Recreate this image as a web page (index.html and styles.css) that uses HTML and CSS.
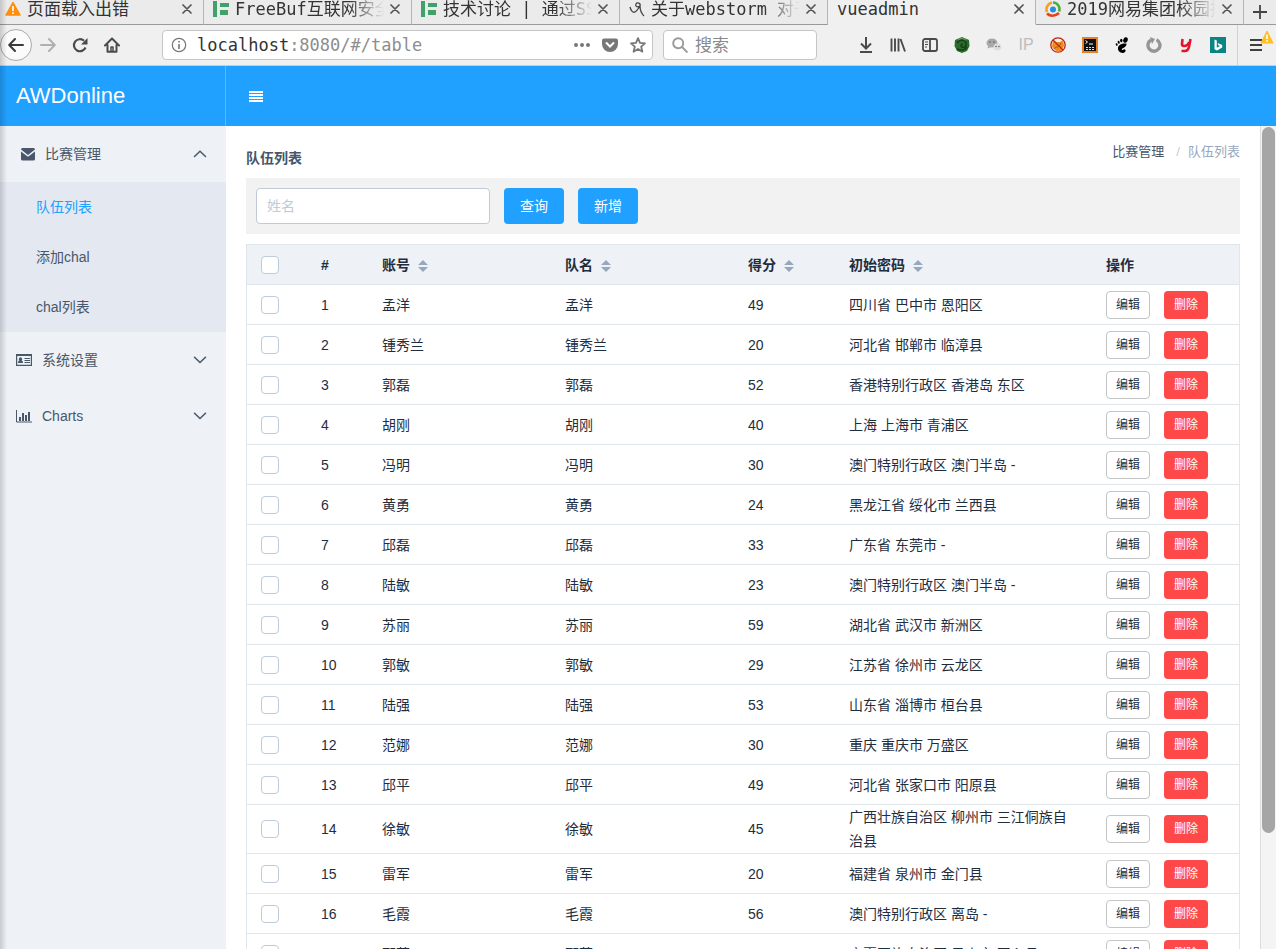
FILE: index.html
```html
<!DOCTYPE html>
<html lang="zh-CN">
<head>
<meta charset="utf-8">
<meta name="viewport" content="width=device-width, initial-scale=1">
<title>vueadmin</title>
<link rel="stylesheet" href="styles.css">
</head>
<body>
<svg class="sprite" aria-hidden="true">
  <symbol id="i-close" viewBox="0 0 10 10"><path d="M1 1l8 8M9 1L1 9" fill="none" stroke="#555" stroke-width="1.7" stroke-linecap="round"/></symbol>
  <symbol id="i-freebuf" viewBox="0 0 16 16"><path d="M0 0h4v16H0zM7 2h9v4H7zM7 9h8v5H7z" fill="#42a06b"/></symbol>
  <symbol id="i-sort" viewBox="0 0 10 12"><path d="M5 0l5 5H0zM0 7h10l-5 5z" fill="#97a8be"/></symbol>
  <symbol id="i-down" viewBox="0 0 14 8"><path d="M1.5 1.2L7 6.5l5.500-5.300" fill="none" stroke="#48576a" stroke-width="1.500" stroke-linecap="round"/></symbol>
  <symbol id="i-up" viewBox="0 0 14 8"><path d="M1.500 6.500L7 1.200l5.500 5.300" fill="none" stroke="#48576a" stroke-width="1.500" stroke-linecap="round"/></symbol>
</svg>

<div class="tabs">
  <div class="tab tab-first">
    <svg class="favicon" viewBox="0 0 16 16"><path d="M8 1.500L15 14H1z" fill="#ff8f0c" stroke="#ff8f0c" stroke-width="1.500" stroke-linejoin="round"/><path d="M8 5v5M8 11.300v1.700" stroke="#fff" stroke-width="1.600"/></svg>
    <span class="tab-title">页面载入出错</span>
    <button class="tab-close" type="button" aria-label="关闭"><svg><use href="#i-close"/></svg></button>
  </div>
  <div class="tab">
    <svg class="favicon"><use href="#i-freebuf"/></svg>
    <span class="tab-title fade">FreeBuf互联网安全新媒体平台</span>
    <button class="tab-close" type="button" aria-label="关闭"><svg><use href="#i-close"/></svg></button>
  </div>
  <div class="tab">
    <svg class="favicon"><use href="#i-freebuf"/></svg>
    <span class="tab-title fade">技术讨论 | 通过SSRF</span>
    <button class="tab-close" type="button" aria-label="关闭"><svg><use href="#i-close"/></svg></button>
  </div>
  <div class="tab">
    <svg class="favicon" viewBox="0 0 16 16" fill="none" stroke="#444" stroke-width="1.300"><path d="M1 6c1 4 3 6 5 5s3-3 5-6c1-3-3-4-4-2s1 4 4 2M11 5c0 4 1 7 4 10"/></svg>
    <span class="tab-title fade">关于webstorm 对于</span>
    <button class="tab-close" type="button" aria-label="关闭"><svg><use href="#i-close"/></svg></button>
  </div>
  <div class="tab active">
    <span class="tab-title">vueadmin</span>
    <button class="tab-close" type="button" aria-label="关闭"><svg><use href="#i-close"/></svg></button>
  </div>
  <div class="tab">
    <svg class="favicon" viewBox="0 0 16 16" fill="none" stroke-width="2.600"><path d="M2 11a7 7 0 0 1 5-9.500" stroke="#f7a01c"/><path d="M8 1.500a6.600 6.600 0 0 1 6 9" stroke="#4cae3f"/><path d="M2 12.500c3 3 8 3 12-.500" stroke="#e5431c"/><circle cx="8" cy="8.500" r="3" fill="#2b8de0" stroke="none"/></svg>
    <span class="tab-title fade">2019网易集团校园招聘</span>
    <button class="tab-close" type="button" aria-label="关闭"><svg><use href="#i-close"/></svg></button>
  </div>
  <button class="tab-new" type="button" aria-label="新标签页"><svg viewBox="0 0 14 14"><path d="M7 0v14M0 7h14" stroke="#444" stroke-width="1.800"/></svg></button>
</div>

<div class="navbar">
  <button class="nav-btn nav-back" type="button" aria-label="后退"><svg viewBox="0 0 16 16" fill="none" stroke="#3b3b3b" stroke-width="2" stroke-linecap="round" stroke-linejoin="round"><path d="M15 8H1.500M7 2L1.200 8 7 14"/></svg></button>
  <button class="nav-btn" type="button" aria-label="前进"><svg viewBox="0 0 16 16" fill="none" stroke="#b0b0b0" stroke-width="2" stroke-linecap="round" stroke-linejoin="round"><path d="M1 8h13.500M9 2l5.800 6L9 14"/></svg></button>
  <button class="nav-btn" type="button" aria-label="刷新"><svg viewBox="0 0 16 16"><path d="M13.500 10.500A6 6 0 1 1 12 3.800" fill="none" stroke="#4a4a4a" stroke-width="2.200"/><path d="M15.500 1v6.500H9z" fill="#4a4a4a"/></svg></button>
  <button class="nav-btn" type="button" aria-label="主页"><svg viewBox="0 0 16 16" fill="none" stroke="#4a4a4a" stroke-width="2" stroke-linejoin="round" stroke-linecap="round"><path d="M1 8.500L8 1.500l7 7M3.500 8v6.800h9V8"/><path d="M7 14v-4h2v4" stroke-width="1.500"/></svg></button>
  <div class="urlbar">
    <svg class="ic16" viewBox="0 0 16 16"><circle cx="8" cy="8" r="6.700" fill="none" stroke="#777" stroke-width="1.200"/><path d="M8 7v5M8 4v1.600" stroke="#777" stroke-width="1.600"/></svg>
    <span class="url">localhost<span class="url-rest">:8080/#/table</span></span>
    <svg class="ic16" viewBox="0 0 16 16" fill="#777"><circle cx="2" cy="8" r="2"/><circle cx="8" cy="8" r="2"/><circle cx="14" cy="8" r="2"/></svg>
    <svg class="ic16" viewBox="0 0 16 16"><path d="M2 1.500h12a2 2 0 0 1 2 2V7A8 8 0 0 1 0 7V3.500a2 2 0 0 1 2-2z" fill="#777"/><path d="M4.500 6L8 9.500 11.500 6" fill="none" stroke="#fff" stroke-width="2" stroke-linecap="round"/></svg>
    <svg class="ic16" viewBox="0 0 16 16"><path d="M8 1.200l2 4.700 5 .400-3.800 3.400 1.200 5L8 12l-4.400 2.700 1.200-5L1 6.300l5-.400z" fill="none" stroke="#777" stroke-width="1.800" stroke-linejoin="round"/></svg>
  </div>
  <label class="searchbar">
    <svg class="ic16" viewBox="0 0 16 16" fill="none" stroke="#999" stroke-width="1.900"><circle cx="6.200" cy="6.200" r="5"/><path d="M10 10l5.500 5.500"/></svg>
    <input type="text" placeholder="搜索" aria-label="搜索">
  </label>
  <div class="tools">
    <button class="nav-btn" type="button" aria-label="下载"><svg viewBox="0 0 16 16" fill="none" stroke="#4a4a4a" stroke-width="2"><path d="M8 0v11M3 6.500l5 5 5-5M2 15h12"/></svg></button>
    <button class="nav-btn" type="button" aria-label="书架"><svg viewBox="0 0 16 16" fill="none" stroke="#4a4a4a" stroke-width="1.900"><path d="M1.500 1.500v13M5 1.500v13M8.500 1.500v13M10.500 2l4.500 12.500"/></svg></button>
    <button class="nav-btn" type="button" aria-label="侧栏"><svg viewBox="0 0 16 16" fill="none" stroke="#4a4a4a" stroke-width="1.800"><rect x="1" y="2" width="14" height="12" rx="2"/><path d="M8 2v12"/><path d="M3 5h3M3 7.500h3M3 10h2" stroke-width="1"/></svg></button>
    <button class="nav-btn" type="button" aria-label="扩展"><svg viewBox="0 0 16 16"><path d="M8 0l7 3 .500 6L13 14l-5 2-5-2L.500 9 1 3z" fill="#2c6a2d"/><path d="M3 6c3-4 8-3 9 0s-2 5-4 4-1-3 1-3M3 12c4 2 8 1 10-2" fill="none" stroke="#123f18" stroke-width="1.500"/><path d="M4 3c3-2 5-2 8 0" stroke="#6da35f" fill="none"/></svg></button>
    <button class="nav-btn" type="button" aria-label="微信"><svg viewBox="0 0 16 16"><ellipse cx="6" cy="6" rx="5.500" ry="4.500" fill="#a9a9a9"/><ellipse cx="11.500" cy="10" rx="4" ry="3.500" fill="#dedede"/><g fill="#555"><circle cx="4" cy="5" r=".800"/><circle cx="8" cy="5" r=".800"/><circle cx="10" cy="9.500" r=".700"/><circle cx="13" cy="9.500" r=".700"/></g><path d="M2 9l-.500 2.500L5 10z" fill="#a9a9a9"/></svg></button>
    <button class="nav-btn ext-ip" type="button">IP</button>
    <button class="nav-btn" type="button" aria-label="FoxyProxy"><svg viewBox="0 0 16 16"><path d="M3 3l3 2h4l3-2 1 6-3 5H6L2 10z" fill="#ef8b1d"/><path d="M4 12c2-3 5-1 7-6" stroke="#a4501c" fill="none"/><circle cx="8" cy="8" r="7.200" fill="none" stroke="#bd2416" stroke-width="1.300"/><path d="M3 3l10 10" stroke="#bd2416" stroke-width="1.300"/></svg></button>
    <button class="nav-btn" type="button" aria-label="终端"><svg viewBox="0 0 16 16"><path d="M0 0h16v16H0z" fill="#e0842a"/><path d="M2 2h12v12H2z" fill="#111"/><path d="M3.500 3.500l2 1.500-2 1.500M7 7h4" fill="none" stroke="#fff"/><path d="M4 10.500h8M4 12.500h8" stroke="#ddd" stroke-dasharray="2 1"/></svg></button>
    <button class="nav-btn" type="button" aria-label="GNOME"><svg viewBox="0 0 16 16"><ellipse cx="11.500" cy="3" rx="2.200" ry="2.800" transform="rotate(20 11.500 3)"/><ellipse cx="7.300" cy="3.600" rx="1.200" ry="1.800"/><ellipse cx="4.700" cy="5.200" rx="1" ry="1.500" transform="rotate(-15 4.700 5.200)"/><ellipse cx="2.700" cy="7.500" rx=".900" ry="1.300" transform="rotate(-25 2.700 7.500)"/><path d="M12.500 6.800c-3-1-8 .500-8.500 4-.400 3 2 5.200 4.500 5.200s4-2.500 2.500-3.500-2 1-3 .500c-1.500-1.500 5-2.500 4.500-6.200z"/></svg></button>
    <button class="nav-btn" type="button" aria-label="同步"><svg viewBox="0 0 16 16"><path d="M10.500 2.800A6 6 0 1 1 5 3" fill="none" stroke="#959595" stroke-width="3.400"/><path d="M4 0l5 2-3 5z" fill="#959595"/></svg></button>
    <button class="nav-btn" type="button" aria-label="有道"><svg viewBox="0 0 16 16" fill="none" stroke="#e3152d" stroke-width="2.600"><path d="M4.500 2L4 7q0 2 2 2 4 0 5-4M12.500 2L11 10q-1 4-4 4H3.500"/></svg></button>
    <button class="nav-btn" type="button" aria-label="必应"><svg viewBox="0 0 16 16"><path d="M0 0h16v16H0z" fill="#0b8484"/><path d="M4.500 2.500l2.300.900v7.400l3.200-1.700-1.700-.900L7.500 6l4.700 2v2.500L7 13.500l-2.500-1.300z" fill="#fff"/></svg></button>
  </div>
  <button class="nav-btn nav-menu" type="button" aria-label="菜单">
    <svg viewBox="0 0 16 16"><path d="M1 3h12M1 8h12M1 13h12" stroke="#3f3f3f" stroke-width="2"/></svg>
    <svg class="warn" viewBox="0 0 14 14"><path d="M7 1l6 12H1z" fill="#ffbf1f" stroke="#ffbf1f" stroke-linejoin="round"/><path d="M7 4.500v4.500M7 10.300V12" stroke="#fff" stroke-width="1.600"/></svg>
  </button>
</div>

<header class="header">
  <div class="logo">AWDonline</div>
  <button class="collapse" type="button" aria-label="折叠菜单"><svg viewBox="0 0 14 11"><path d="M0 1h14M0 4h14M0 7h14M0 10h14" stroke="#fff" stroke-width="2"/></svg></button>
</header>

<div class="body">
  <nav class="sidebar">
    <button class="menu-title" type="button">
      <svg class="menu-icon wide" viewBox="0 0 24 14"><path d="M5 2.500A1.500 1.500 0 0 1 6.500 1h11A1.500 1.500 0 0 1 19 2.500L12 8 5 2.500zM5 4.500l7 5.300 7-5.300V12a1.500 1.500 0 0 1-1.500 1.500h-11A1.500 1.500 0 0 1 5 12z" fill="#48576a"/></svg>
      <span>比赛管理</span><svg class="arrow"><use href="#i-up"/></svg>
    </button>
    <div class="submenu">
      <a class="current" href="#/table">队伍列表</a>
      <a href="#/form">添加chal</a>
      <a href="#/list">chal列表</a>
    </div>
    <button class="menu-title" type="button">
      <svg class="menu-icon" viewBox="0 0 16 14"><path d="M.600 1.600h14.800v10.800H.600z" fill="none" stroke="#48576a" stroke-width="1.200"/><path d="M0 1h16v2H0zM2 10c0-2 1-2.500 1.500-2.500a1.700 1.700 0 1 1 2 0C6 7.500 7 8 7 10z" fill="#48576a"/><path d="M8.500 5.500H14M8.500 7.500H14M8.500 9.500H14" stroke="#48576a"/></svg>
      <span>系统设置</span><svg class="arrow"><use href="#i-down"/></svg>
    </button>
    <button class="menu-title" type="button">
      <svg class="menu-icon" viewBox="0 0 16 14"><path d="M.500 1v12H16" fill="none" stroke="#48576a"/><path d="M3 8h2v4H3zM6 4h2v8H6zM9 6h2v6H9zM12 3h2v9h-2z" fill="#48576a"/></svg>
      <span>Charts</span><svg class="arrow"><use href="#i-down"/></svg>
    </button>
  </nav>

  <main class="content">
    <div class="page-head">
      <strong class="page-title">队伍列表</strong>
      <div class="crumbs"><a href="#/">比赛管理</a><span class="sep">/</span><span class="last">队伍列表</span></div>
    </div>
    <form class="filters">
      <input type="text" placeholder="姓名" aria-label="姓名">
      <button class="btn-primary" type="button">查询</button>
      <button class="btn-primary" type="button">新增</button>
    </form>
    <table class="grid">
      <colgroup><col class="c-sel"><col class="c-no"><col class="c-name"><col class="c-name"><col class="c-score"><col class="c-addr"><col class="c-ops"></colgroup>
      <thead>
        <tr><th class="sel"><input type="checkbox" aria-label="全选"></th><th>#</th><th>账号<svg class="sort"><use href="#i-sort"/></svg></th><th>队名<svg class="sort"><use href="#i-sort"/></svg></th><th>得分<svg class="sort"><use href="#i-sort"/></svg></th><th>初始密码<svg class="sort"><use href="#i-sort"/></svg></th><th>操作</th></tr>
      </thead>
      <tbody>
        <tr><td class="sel"><input type="checkbox" aria-label="选择 1"></td><td>1</td><td>孟洋</td><td>孟洋</td><td>49</td><td>四川省 巴中市 恩阳区</td><td><div class="ops"><button class="btn-edit" type="button">编辑</button><button class="btn-del" type="button">删除</button></div></td></tr>
        <tr><td class="sel"><input type="checkbox" aria-label="选择 2"></td><td>2</td><td>锺秀兰</td><td>锺秀兰</td><td>20</td><td>河北省 邯郸市 临漳县</td><td><div class="ops"><button class="btn-edit" type="button">编辑</button><button class="btn-del" type="button">删除</button></div></td></tr>
        <tr><td class="sel"><input type="checkbox" aria-label="选择 3"></td><td>3</td><td>郭磊</td><td>郭磊</td><td>52</td><td>香港特别行政区 香港岛 东区</td><td><div class="ops"><button class="btn-edit" type="button">编辑</button><button class="btn-del" type="button">删除</button></div></td></tr>
        <tr><td class="sel"><input type="checkbox" aria-label="选择 4"></td><td>4</td><td>胡刚</td><td>胡刚</td><td>40</td><td>上海 上海市 青浦区</td><td><div class="ops"><button class="btn-edit" type="button">编辑</button><button class="btn-del" type="button">删除</button></div></td></tr>
        <tr><td class="sel"><input type="checkbox" aria-label="选择 5"></td><td>5</td><td>冯明</td><td>冯明</td><td>30</td><td>澳门特别行政区 澳门半岛 -</td><td><div class="ops"><button class="btn-edit" type="button">编辑</button><button class="btn-del" type="button">删除</button></div></td></tr>
        <tr><td class="sel"><input type="checkbox" aria-label="选择 6"></td><td>6</td><td>黄勇</td><td>黄勇</td><td>24</td><td>黑龙江省 绥化市 兰西县</td><td><div class="ops"><button class="btn-edit" type="button">编辑</button><button class="btn-del" type="button">删除</button></div></td></tr>
        <tr><td class="sel"><input type="checkbox" aria-label="选择 7"></td><td>7</td><td>邱磊</td><td>邱磊</td><td>33</td><td>广东省 东莞市 -</td><td><div class="ops"><button class="btn-edit" type="button">编辑</button><button class="btn-del" type="button">删除</button></div></td></tr>
        <tr><td class="sel"><input type="checkbox" aria-label="选择 8"></td><td>8</td><td>陆敏</td><td>陆敏</td><td>23</td><td>澳门特别行政区 澳门半岛 -</td><td><div class="ops"><button class="btn-edit" type="button">编辑</button><button class="btn-del" type="button">删除</button></div></td></tr>
        <tr><td class="sel"><input type="checkbox" aria-label="选择 9"></td><td>9</td><td>苏丽</td><td>苏丽</td><td>59</td><td>湖北省 武汉市 新洲区</td><td><div class="ops"><button class="btn-edit" type="button">编辑</button><button class="btn-del" type="button">删除</button></div></td></tr>
        <tr><td class="sel"><input type="checkbox" aria-label="选择 10"></td><td>10</td><td>郭敏</td><td>郭敏</td><td>29</td><td>江苏省 徐州市 云龙区</td><td><div class="ops"><button class="btn-edit" type="button">编辑</button><button class="btn-del" type="button">删除</button></div></td></tr>
        <tr><td class="sel"><input type="checkbox" aria-label="选择 11"></td><td>11</td><td>陆强</td><td>陆强</td><td>53</td><td>山东省 淄博市 桓台县</td><td><div class="ops"><button class="btn-edit" type="button">编辑</button><button class="btn-del" type="button">删除</button></div></td></tr>
        <tr><td class="sel"><input type="checkbox" aria-label="选择 12"></td><td>12</td><td>范娜</td><td>范娜</td><td>30</td><td>重庆 重庆市 万盛区</td><td><div class="ops"><button class="btn-edit" type="button">编辑</button><button class="btn-del" type="button">删除</button></div></td></tr>
        <tr><td class="sel"><input type="checkbox" aria-label="选择 13"></td><td>13</td><td>邱平</td><td>邱平</td><td>49</td><td>河北省 张家口市 阳原县</td><td><div class="ops"><button class="btn-edit" type="button">编辑</button><button class="btn-del" type="button">删除</button></div></td></tr>
        <tr><td class="sel"><input type="checkbox" aria-label="选择 14"></td><td>14</td><td>徐敏</td><td>徐敏</td><td>45</td><td>广西壮族自治区 柳州市 三江侗族自治县</td><td><div class="ops"><button class="btn-edit" type="button">编辑</button><button class="btn-del" type="button">删除</button></div></td></tr>
        <tr><td class="sel"><input type="checkbox" aria-label="选择 15"></td><td>15</td><td>雷军</td><td>雷军</td><td>20</td><td>福建省 泉州市 金门县</td><td><div class="ops"><button class="btn-edit" type="button">编辑</button><button class="btn-del" type="button">删除</button></div></td></tr>
        <tr><td class="sel"><input type="checkbox" aria-label="选择 16"></td><td>16</td><td>毛霞</td><td>毛霞</td><td>56</td><td>澳门特别行政区 离岛 -</td><td><div class="ops"><button class="btn-edit" type="button">编辑</button><button class="btn-del" type="button">删除</button></div></td></tr>
        <tr><td class="sel"><input type="checkbox" aria-label="选择 17"></td><td>17</td><td>邵芳</td><td>邵芳</td><td>54</td><td>宁夏回族自治区 吴忠市 同心县</td><td><div class="ops"><button class="btn-edit" type="button">编辑</button><button class="btn-del" type="button">删除</button></div></td></tr>
      </tbody>
    </table>
  </main>
  <div class="scroll-track"><div class="scroll-thumb"></div></div>
</div>
<div class="edge-shadow"></div>
</body>
</html>
```

FILE: styles.css
```css
* { box-sizing: border-box; }

body {
  margin: 0;
  height: 100vh;
  overflow: hidden;
  display: flex;
  flex-direction: column;
  background: #fff;
  color: #1f2d3d;
  font: 14px/24px "Liberation Sans", "Noto Sans CJK SC", sans-serif;
}

button {
  font: inherit;
  color: inherit;
  border: 0;
  padding: 0;
  background: none;
  cursor: pointer;
}

input { font: inherit; }
a { color: inherit; text-decoration: none; }
svg { display: block; flex: none; }
.sprite { position: absolute; width: 0; height: 0; }

/* Browser tabs */
.tabs {
  display: flex;
  flex: none;
  height: 25px;
  background: #ebebeb;
  color: #333;
  font: 17px/19px "DejaVu Sans Mono", "Noto Sans CJK SC", monospace;
}

.tab {
  flex: none;
  display: flex;
  align-items: flex-start;
  gap: 6px;
  width: 208px;
  padding: 0 11px 0 9px;
  border-right: 1px solid #b5b5b5;
  border-bottom: 1px solid #999;
}

.tab-first { width: 204px; padding-left: 5px; }
.tab.active { background: #f0f0f0; border-bottom-color: #f0f0f0; }
.favicon { width: 16px; height: 16px; margin-top: 1px; }
.tab-title { flex: 1; min-width: 0; height: 24px; overflow: hidden; white-space: nowrap; }
.fade { -webkit-mask-image: linear-gradient(to left, transparent, #000 36px); mask-image: linear-gradient(to left, transparent, #000 36px); }
.tab-close svg { width: 10px; height: 10px; }
.tab-close { padding-top: 4px; }
.tab-new { flex: 1; padding: 1px 9px; border-bottom: 1px solid #999; }
.tab-new svg { width: 14px; height: 14px; }

/* Browser toolbar */
.navbar {
  display: flex;
  flex: none;
  align-items: center;
  height: 41px;
  background: #f0f0f0;
  border-bottom: 1px solid #ccc;
  color: #333;
  font: 17px/24px "DejaVu Sans Mono", "Noto Sans CJK SC", monospace;
}

.nav-btn {
  display: flex;
  flex: none;
  align-items: center;
  justify-content: center;
  width: 32px;
  height: 32px;
}

.nav-btn svg, .ic16 { width: 16px; height: 16px; }
.nav-back { border: 1px solid #aaa; border-radius: 50%; background: #fbfbfb; }

.urlbar, .searchbar {
  display: flex;
  align-items: center;
  height: 30px;
  background: #fff;
  border: 1px solid #c6c6c6;
  border-radius: 4px;
}

.urlbar { flex: 1; min-width: 0; gap: 12px; margin: 0 10px 0 34px; padding: 0 6px 0 8px; }
.url { flex: 1; margin-left: -2px; white-space: nowrap; overflow: hidden; }
.url-rest { color: #8d8d8d; }
.searchbar { flex: none; width: 154px; gap: 7px; padding: 0 8px; }
.searchbar input { flex: 1; min-width: 0; border: 0; padding: 0; outline: 0; background: none; }
.searchbar input::placeholder { color: #8a8a8a; opacity: 1; }
.tools { display: flex; margin: 0 3px 0 33px; }
.ext-ip { color: #bdbdbd; font: 16px/20px "Liberation Sans", sans-serif; }

.nav-menu {
  position: relative;
  width: 39px;
  height: 40px;
  border-left: 1px solid #d2d2d2;
}

.nav-menu .warn { position: absolute; top: 5px; right: 2px; width: 14px; height: 14px; }

/* App header */
.header {
  display: flex;
  flex: none;
  align-items: center;
  height: 60px;
  background: #20a0ff;
  color: #fff;
}

.logo {
  width: 226px;
  padding-left: 16px;
  border-right: 1px solid rgba(238, 241, 246, 0.3);
  font-size: 22px;
  line-height: 60px;
}

.collapse { padding: 8px 23px; }
.collapse svg { width: 14px; height: 11px; }

.body { display: flex; flex: 1; min-height: 0; }

/* Sidebar */
.sidebar { flex: none; width: 226px; background: #eef1f6; color: #48576a; }

.menu-title {
  display: flex;
  align-items: center;
  width: 100%;
  height: 56px;
  padding: 0 19px 0 16px;
}

.menu-title span { flex: 1; text-align: left; }
.menu-icon { width: 16px; height: 14px; margin-right: 10px; }
.menu-icon.wide { width: 24px; margin-right: 5px; }
.arrow { width: 14px; height: 8px; }
.submenu { background: #e4e8f1; }
.submenu a { display: block; padding-left: 36px; line-height: 50px; }
.submenu .current { color: #20a0ff; }

/* Content */
.content { flex: 1; min-width: 0; padding: 0 20px; overflow: hidden; }
.page-head { display: flex; justify-content: space-between; height: 52px; }
.page-title { padding-top: 20px; color: #475669; }
.crumbs { display: flex; padding-top: 14px; font-size: 13px; color: #475669; }
.crumbs .sep { margin: 0 8px 0 12px; color: #bfcbd9; }
.crumbs .last { color: #97a8be; }

.filters { display: flex; gap: 14px; padding: 10px; margin-bottom: 10px; background: #f2f2f2; }

.filters input {
  width: 234px;
  height: 36px;
  padding: 0 10px;
  border: 1px solid #bfcbd9;
  border-radius: 4px;
  background: #fff;
}

.filters input::placeholder { color: #c0cbd9; opacity: 1; }
.btn-primary { width: 60px; height: 36px; border-radius: 4px; background: #20a0ff; color: #fff; }

.grid {
  width: 100%;
  table-layout: fixed;
  border: 1px solid #dfe6ec;
  border-collapse: separate;
  border-spacing: 0;
}

.c-sel { width: 56px; }
.c-no { width: 61px; }
.c-name { width: 183px; }
.c-score { width: 101px; }
.c-ops { width: 151px; }

.grid th, .grid td {
  height: 40px;
  padding: 0 18px;
  border-bottom: 1px solid #dfe6ec;
  text-align: left;
  vertical-align: middle;
}

.grid th { background: #eef1f6; }
.grid .sel { padding: 0 14px; }

.grid input {
  display: block;
  appearance: none;
  width: 18px;
  height: 18px;
  margin: 0;
  border: 1px solid #bfcbd9;
  border-radius: 4px;
  background: #fff;
}

.sort { display: inline-block; width: 10px; height: 12px; margin-left: 8px; vertical-align: -2px; }
.ops { display: flex; gap: 14px; }
.btn-edit, .btn-del { width: 44px; height: 28px; border-radius: 4px; font-size: 12px; line-height: 16px; }
.btn-edit { border: 1px solid #c4c4c4; background: #fff; }
.btn-del { background: #ff4949; color: #fff; }

/* Scroll indicator */
.scroll-track { flex: none; width: 16px; padding: 1px; border-left: 1px solid #ddd; background: #f4f4f4; }
.scroll-thumb { height: 86%; border-radius: 7px; background: #a6a6a6; }

.edge-shadow {
  position: absolute;
  top: 0;
  bottom: 0;
  left: 0;
  width: 7px;
  pointer-events: none;
  background: linear-gradient(to right, rgba(0, 0, 0, 0.16), transparent);
}
```
